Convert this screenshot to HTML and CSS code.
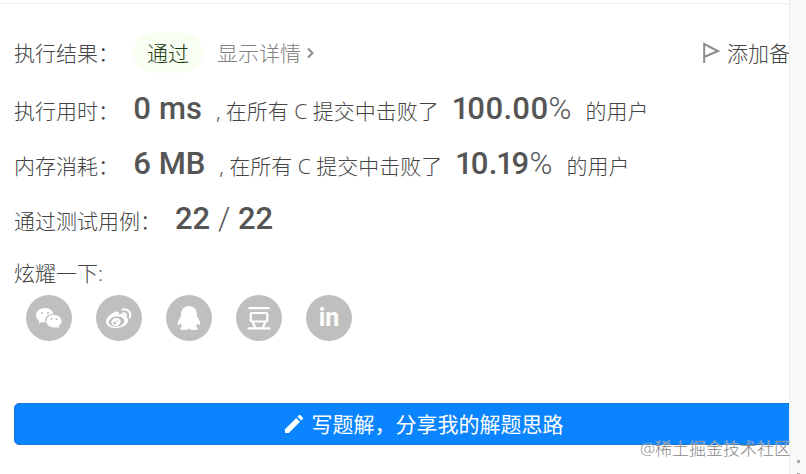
FILE: index.html
```html
<!DOCTYPE html>
<html lang="zh">
<head>
    <meta charset="UTF-8">
    <title>执行结果</title>
    <link rel="stylesheet" href="styles.css">
</head>
<body>
    <div class="page">
        <main class="panel">
            <div class="content">
                <div class="row result-row">
                    <span class="label">执行结果：</span>
                    <span class="status">通过</span>
                    <a class="detail" href="#">显示详情
                        <svg width="7" height="12" viewBox="0 0 7 12"><path d="M1 1.5L5.500 6L1 10.500"/></svg>
                    </a>
                    <button class="note-btn">
                        <svg width="18" height="22" viewBox="0 0 18 22"><path d="M2.200 21V2L16 9L2.200 15"/></svg>
                        添加备注
                    </button>
                </div>
                <div class="row">
                    <span class="label">执行用时：</span>
                    <span class="num">0 ms</span>
                    <span>, 在所有 C 提交中击败了</span>
                    <span class="num">100.00<span class="percent">%</span></span>
                    <span>的用户</span>
                </div>
                <div class="row">
                    <span class="label">内存消耗：</span>
                    <span class="num">6 MB</span>
                    <span>, 在所有 C 提交中击败了</span>
                    <span class="num">10.19<span class="percent">%</span></span>
                    <span>的用户</span>
                </div>
                <div class="row">
                    <span class="label">通过测试用例：</span>
                    <span class="num">22 <span class="percent">/</span> 22</span>
                </div>
                <div class="share-title">炫耀一下:</div>
                <div class="share">
                    <button aria-label="微信">
                        <svg width="46" height="46" viewBox="0 0 46 46">
                            <path fill="#fff" d="M19 13c-5 0-9 3.200-9 7.300 0 2.400 1.300 4.300 3.400 5.700l-.9 2.700 3.200-1.600c1.200.3 2.200.5 3.700.4-1.500-5 2.400-8.800 8-8.800C26.500 15.300 23.200 13 19 13z"/>
                            <path fill="#fff" d="M28 19.700c-4.500 0-7.700 2.900-7.700 6.400s3.200 6.500 7.700 6.500c.9 0 1.800-.2 2.700-.4l2.500 1.300-.7-2.200c1.900-1.300 3-3.100 3-5.200 0-3.500-3.300-6.400-7.500-6.400z"/>
                            <circle cx="16" cy="18" r="1.100"/><circle cx="22" cy="18" r="1.100"/>
                            <circle cx="25.500" cy="24" r="1"/><circle cx="30.500" cy="24" r="1"/>
                        </svg>
                    </button>
                    <button aria-label="微博">
                        <svg width="46" height="46" viewBox="0 0 46 46">
                            <path fill="#fff" d="M20.500 16.500c2-.5 3 .7 2.300 3 3.500-1.400 7-1.200 6.200 2.300 6 2 3.200 7.600-2.200 9.900-7 3-16.800.8-16.800-5 0-3.800 5.700-9.200 10.500-10.200z"/>
                            <ellipse cx="20.500" cy="26.600" rx="7.900" ry="5.100" transform="rotate(-8 20.500 26.600)"/>
                            <ellipse cx="20" cy="27" rx="4.700" ry="4" fill="#fff" transform="rotate(-20 20 27)"/>
                            <circle cx="18.700" cy="28" r="1.600"/><circle cx="21.300" cy="26.300" r=".8"/>
                            <path class="wave" d="M26.500 14.500c5-1.200 9.300 3 7.300 8"/>
                            <path class="wave thin" d="M26.700 18.200c2.300-.6 4.200 1.300 3.400 3.500"/>
                        </svg>
                    </button>
                    <button aria-label="QQ">
                        <svg width="46" height="46" viewBox="0 0 46 46">
                            <path fill="#fff" d="M23 11c-5 0-8 3.700-8 8.200v2.400c-1.700 2.300-3.500 5.400-3.300 7.700.2 1.500 1.400.8 2.700-1 .4 1.300 1 2.300 2 3.200-4 1.600-2.100 3.800 1.800 3.500 2.200 0 3.700-.7 4.800-1.600 1.100.9 2.600 1.600 4.800 1.600 3.900.3 5.800-1.900 1.800-3.500 1-.9 1.600-1.900 2-3.200 1.300 1.800 2.500 2.500 2.700 1 .2-2.300-1.600-5.400-3.300-7.700v-2.400c0-4.500-3-8.200-8-8.200z"/>
                        </svg>
                    </button>
                    <button aria-label="豆瓣">
                        <svg width="46" height="46" viewBox="0 0 46 46">
                            <g fill="none" stroke="#fff" stroke-width="2.200">
                                <path d="M12.500 13.200h21M11.500 33.300h23"/>
                                <rect x="14.700" y="18" width="16.600" height="8.500" rx="1"/>
                                <path d="M16.800 27.500l2.400 5M29.200 27.500l-2.400 5"/>
                            </g>
                        </svg>
                    </button>
                    <button class="linkedin" aria-label="LinkedIn">in</button>
                </div>
                <button class="write-btn">
                    <svg width="20" height="20" viewBox="0 0 20 20" fill="#fff"><path d="M1 15.200L12.200 4l3.800 3.800L4.800 19H1zM13.400 2.800l1.300-1.300c.6-.6 1.400-.6 2 0l1.800 1.800c.6.600.6 1.400 0 2l-1.300 1.300z"/></svg>
                    写题解，分享我的解题思路
                </button>
            </div>
        </main>
        <aside class="side">
            <i class="dot"></i>
            <i class="dot"></i>
        </aside>
        <div class="watermark">@稀土掘金技术社区</div>
    </div>
</body>
</html>
```

FILE: styles.css
```css
* {
    box-sizing: border-box;
}

body {
    margin: 0;
    font-family: "Open Sans", "Noto Sans CJK SC", sans-serif;
    font-size: 21px;
    font-weight: 300;
    line-height: 32px;
    color: #444;
    background-color: #fff;
}

button {
    border: none;
    padding: 0;
    background: none;
    font: inherit;
    color: inherit;
    cursor: pointer;
}

.page {
    position: relative;
    display: flex;
    min-height: 100vh;
    overflow: hidden;
}

.panel {
    flex: 1;
    min-width: 0;
    margin-top: 3px;
    border-top: 1px solid #eee;
    overflow: hidden;
}

/* the content is wider than the panel and gets cut on the right */
.content {
    margin-right: -44px;
    padding: 20px 0 28px 14px;
}

.row {
    display: flex;
    align-items: baseline;
    gap: 14px;
    height: 55px;
    line-height: 55px;
    white-space: nowrap;
}

.result-row {
    align-items: center;
    height: 57px;
    line-height: 32px;
}

.status {
    padding: 4px 14px;
    border-radius: 20px;
    background-color: #f8fff2;
    color: #1d3b12;
}

.detail {
    display: flex;
    align-items: center;
    gap: 6px;
    color: #808080;
    text-decoration: none;
}

.detail svg,
.note-btn svg {
    fill: none;
    stroke: #8c8c8c;
    stroke-width: 2;
}

.note-btn {
    display: flex;
    align-items: center;
    gap: 7px;
    margin-left: auto;
    margin-right: 22px;
}

.num {
    font-family: Roboto, sans-serif;
    font-size: 31px;
    font-weight: 500;
    font-variant-numeric: proportional-nums;
    color: #555;
}

.percent {
    font-weight: 300;
}

.share-title {
    margin-top: 11px;
}

.share {
    display: flex;
    gap: 24px;
    margin: 6px 12px 0;
}

.share button {
    width: 46px;
    height: 46px;
    border-radius: 50%;
    background-color: #bfbfbf;
    fill: #bfbfbf;
}

.share svg {
    display: block;
}

.wave {
    fill: none;
    stroke: #fff;
    stroke-width: 2;
    stroke-linecap: round;
}

.wave.thin {
    stroke-width: 1.5;
}

.share .linkedin {
    font-family: Roboto, sans-serif;
    font-size: 25px;
    font-weight: 700;
    line-height: 46px;
    color: #fff;
}

.write-btn {
    display: flex;
    align-items: center;
    justify-content: center;
    gap: 8px;
    width: 100%;
    height: 42px;
    margin-top: 62px;
    border: 1px solid #1475d4;
    border-radius: 5px;
    background-color: #0a84ff;
    color: #fff;
    font-weight: 400;
}

.side {
    display: flex;
    flex-direction: column;
    justify-content: flex-end;
    align-items: center;
    gap: 10px;
    width: 17px;
    border-left: 1px solid #eee;
    background-color: #f8f8f8;
}

.dot {
    width: 3px;
    height: 3px;
    background-color: #aaa;
}

.dot:last-child {
    height: 1px;
}

.watermark {
    position: absolute;
    right: 15px;
    bottom: 11px;
    font-size: 17px;
    line-height: 28px;
    color: #888;
    text-shadow: 0 0 1px #fff;
}
```
